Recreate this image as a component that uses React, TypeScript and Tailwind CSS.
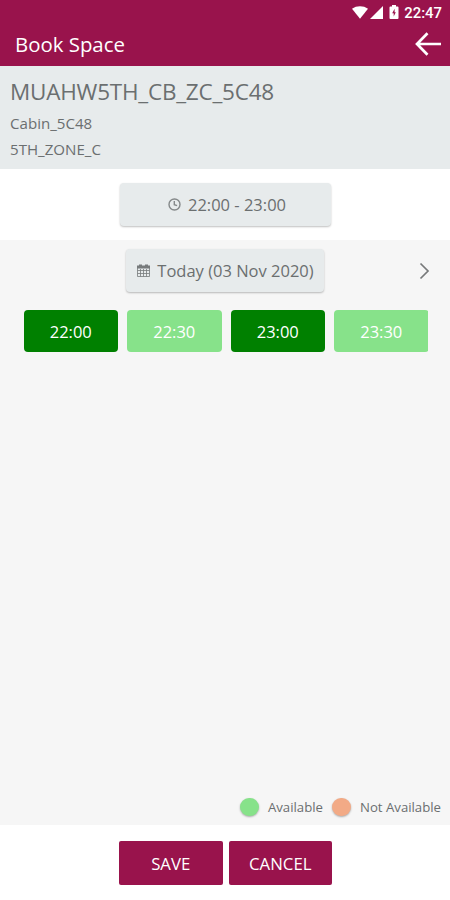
import React, { useState } from 'react';

interface Slot {
  time: string;
  selected: boolean;
}

const initialSlots: Slot[] = [
  { time: '22:00', selected: true },
  { time: '22:30', selected: false },
  { time: '23:00', selected: true },
  { time: '23:30', selected: false },
];

const StatusBar: React.FC = () => (
  <div className="flex h-6 items-center justify-end pr-2 text-white">
    <svg width="16" height="13" viewBox="0 0 16 13" fill="currentColor" className="mr-0.5">
      <path d="M0 2.8C4.6-.5 11.4-.5 16 2.8L8 12.8Z" />
    </svg>
    <svg width="13" height="13" viewBox="0 0 13 13" fill="currentColor" className="mr-1.5">
      <path d="M13 0V13H0Z" />
    </svg>
    <svg width="10" height="14" viewBox="0 0 10 14" fill="currentColor" fillRule="evenodd" className="mr-[5px]">
      <path d="M3 0h4v1.5h1.6q.9 0 .9.9v10.7q0 .9-.9.9H1.4q-.9 0-.9-.9V2.4q0-.9.9-.9H3ZM5.6 3.8 3.2 8.2h1.5v3.2L6.8 7.2H5.6Z" />
    </svg>
    <span className="pt-px font-[Roboto] text-[14.9px] leading-6 font-medium">22:47</span>
  </div>
);

const BackButton: React.FC = () => (
  <button aria-label="Back">
    <svg width="26" height="24" viewBox="0 0 26 24" fill="none" stroke="white" strokeWidth="2.7">
      <path d="M12.5 1.2 2 12l10.5 10.8M2 12h24" />
    </svg>
  </button>
);

const ClockIcon: React.FC = () => (
  <svg width="13" height="13" viewBox="0 0 13 13" fill="none" stroke="#85898a" strokeWidth="1.4">
    <circle cx="6.5" cy="6.5" r="5.5" />
    <path d="M6.3 3v3.7l2.8 1" />
  </svg>
);

const CalendarIcon: React.FC = () => (
  <svg width="13" height="13" viewBox="0 0 13 13" fill="none" stroke="#777b7c">
    <path d="M.5 2.5h12v10H.5ZM.5 6.5h12M.5 9.5h12M3.5 5v7.500M6.500 5v7.500M9.500 5v7.500" strokeWidth=".8" />
    <path d="M0 3h13M3.500 .5v3.500M9.500 .5v3.500" strokeWidth="3" />
  </svg>
);

const App: React.FC = () => {
  const [slots, setSlots] = useState<Slot[]>(initialSlots);

  const toggleSlot = (time: string) => {
    setSlots((prev) => prev.map((s) => (s.time === time ? { ...s, selected: !s.selected } : s)));
  };

  return (
    <div className="flex h-[900px] w-[450px] flex-col overflow-hidden bg-white font-['Open_Sans','Noto_Sans',sans-serif] text-[#6b6f70]">
      {/* Header */}
      <header className="h-[66px] shrink-0 bg-[#99134c]">
        <StatusBar />
        <div className="flex h-10 items-center justify-between pr-[9px] pl-[15px]">
          <h1 className="text-[20.4px] leading-10 text-white">Book Space</h1>
          <BackButton />
        </div>
      </header>

      {/* Space details */}
      <section className="h-[103px] shrink-0 bg-[#e7ebec] px-2.5 pt-[11px]">
        <h2 className="text-[22.5px] leading-[30px] tracking-[-0.22px]">MUAHW5TH_CB_ZC_5C48</h2>
        <p className="mt-[3px] text-[15.1px] leading-[26px]">Cabin_5C48</p>
        <p className="text-[15.1px] leading-[26px]">5TH_ZONE_C</p>
      </section>

      {/* Selected time */}
      <section className="flex h-[71px] shrink-0 justify-center pt-3.5 pl-px">
        <button className="flex h-[43px] w-[211px] items-center justify-center gap-[7px] rounded bg-[#e7ebec] pl-[3px] text-[16.5px] shadow-[0_1px_2px_rgba(0,0,0,0.25)]">
          <ClockIcon />
          <span className="pt-0.5">22:00 - 23:00</span>
        </button>
      </section>

      {/* Date and slots */}
      <main className="flex flex-1 flex-col bg-[#f6f6f6] pt-[9px]">
        <div className="grid grid-cols-[126px_198px_1fr] items-center">
          <button className="col-start-2 flex h-[43px] items-center justify-center gap-[7px] rounded bg-[#e7ebec] pl-px text-[16.5px] shadow-[0_1px_2px_rgba(0,0,0,0.25)]">
            <CalendarIcon />
            <span className="pt-0.5">Today (03 Nov 2020)</span>
          </button>
          <button aria-label="Next day" className="mr-5 justify-self-end">
            <svg width="11" height="18" viewBox="0 0 11 18" fill="none" stroke="#77797a" strokeWidth="1.7">
              <path d="M1.5 1.5 9 9l-7.5 7.5" />
            </svg>
          </button>
        </div>

        <div className="mt-[18px] mr-[22px] ml-[23.5px] flex gap-[9px] overflow-hidden">
          {slots.map((slot) => (
            <button
              key={slot.time}
              onClick={() => toggleSlot(slot.time)}
              className={`h-[42px] w-[94.5px] shrink-0 rounded pt-0.5 text-[16.5px] text-white ${
                slot.selected ? 'bg-[#008000]' : 'bg-[#87e28a]'
              }`}
            >
              {slot.time}
            </button>
          ))}
        </div>

        <div className="mt-auto mb-2 flex items-center justify-end pr-[9px] text-[13.2px] leading-5">
          <span className="mr-[9px] size-[18.5px] rounded-full bg-[#87e28a] shadow-[0_1px_2px_rgba(0,0,0,0.3)]" />
          <span className="mr-[9.5px]">Available</span>
          <span className="mr-[9px] size-[18.5px] rounded-full bg-[#f2aa86] shadow-[0_1px_2px_rgba(0,0,0,0.3)]" />
          <span>Not Available</span>
        </div>
      </main>

      {/* Actions */}
      <footer className="flex h-[75px] shrink-0 justify-center gap-1.5 pt-4 pl-px text-[16.8px] text-white">
        <button className="h-11 w-[103.5px] rounded-xs bg-[#99134c] pt-0.5">SAVE</button>
        <button className="h-11 w-[103.5px] rounded-xs bg-[#99134c] pt-0.5">CANCEL</button>
      </footer>
    </div>
  );
};

export default App;
